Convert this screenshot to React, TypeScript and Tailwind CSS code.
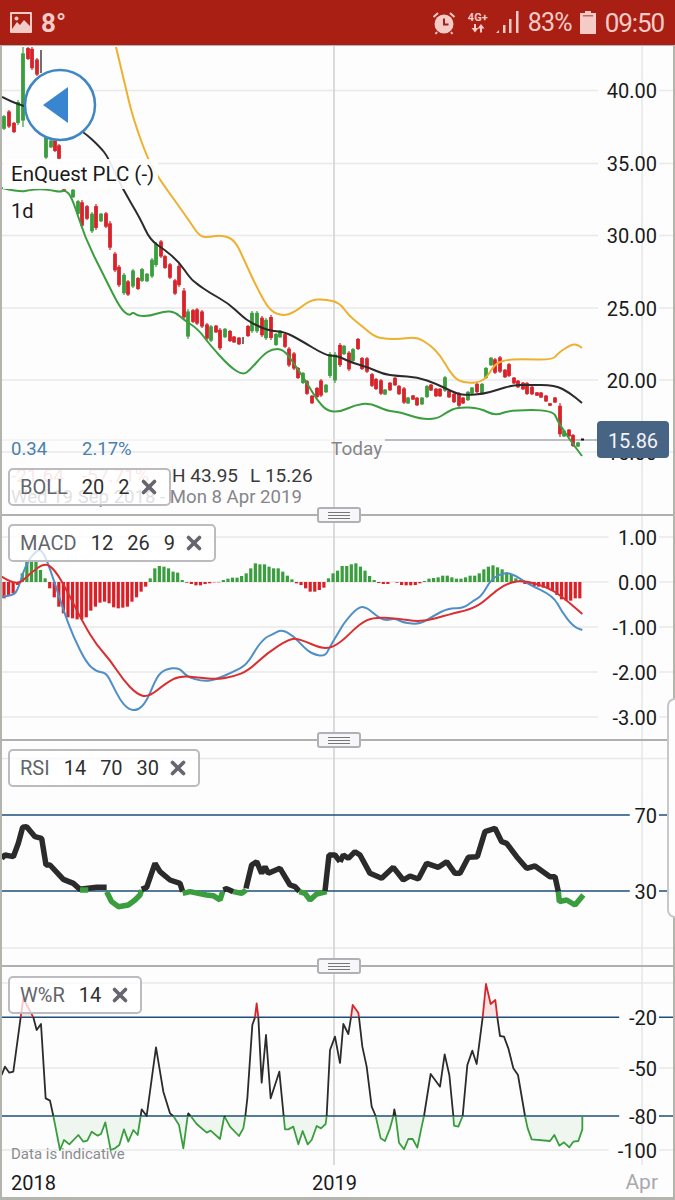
import React from 'react';
import { X } from 'lucide-react';

type Pt = [number, number];
type Seg = { c: 'k' | 'g' | 'r'; p: Pt[] };

const GREEN = '#3a9e3f';
const RED = '#d9232b';
const BLUE_LINE = '#1f4e79';
const DARK = '#2b2b2b';
const strokeOf = { k: DARK, g: GREEN, r: RED };

// points below were read off 3x crops, so convert back to page coords
const z = (ox: number, oy: number, pts: Pt[]): Pt[] => pts.map(([x, y]) => [ox + x / 3, oy + y / 3]);

const smooth = (pts: Pt[]) => {
  let d = 'M' + pts[0][0] + ' ' + pts[0][1];
  for (let i = 1; i < pts.length - 1; i++) {
    const mx = (pts[i][0] + pts[i + 1][0]) / 2;
    const my = (pts[i][1] + pts[i + 1][1]) / 2;
    d += ' Q' + pts[i][0] + ' ' + pts[i][1] + ' ' + mx + ' ' + my;
  }
  const last = pts[pts.length - 1];
  return d + ' L' + last[0] + ' ' + last[1];
};

const poly = (pts: Pt[]) => pts.map((p) => p.join(',')).join(' ');

// x, top, bottom, colour (0 red, 1 green, 2 black)
const candles: number[][] = [
  [4,115,130,1],[9,110,128,0],[14,122,133,0],[18,100,125,1],[23,47,127,1],[28,47,60,0],[32,47,70,0],[37,58,76,0],[41,50,73,2],
  [46,130,160,1],[51,140,148,1],[55,140,152,0],[59,144,160,0],[64,189,192,0],[73,189,198,1],[78,200,215,1],[82,200,228,0],
  [87,205,220,0],[92,212,233,1],[96,204,230,0],[101,213,222,1],[106,212,228,0],[110,221,250,0],[115,252,272,0],[119,265,287,0],
  [124,273,295,1],[128,280,296,0],[133,269,288,1],[138,277,290,0],[142,268,282,1],[147,273,282,1],[152,258,278,1],[156,242,267,1],
  [161,240,258,0],[165,255,269,0],[170,263,279,0],[175,279,295,0],[179,264,287,0],[184,288,320,0],[188,309,339,1],[193,309,323,0],
  [197,308,325,0],[202,310,328,0],[207,323,340,0],[211,325,342,1],[216,325,333,0],[220,328,350,0],[225,328,338,1],[230,330,342,0],
  [234,336,343,0],[239,337,345,0],[243,337,344,2],[248,325,337,0],[252,311,333,1],[257,311,333,1],[262,316,337,0],[266,318,340,1],
  [271,315,340,0],[276,333,346,1],[280,330,338,1],[285,333,348,0],[289,347,367,0],[294,352,370,0],[298,367,379,0],[303,372,384,1],
  [307,380,395,0],[312,395,404,0],[317,387,398,0],[321,379,397,0],[326,384,393,1],[330,352,378,1],[335,352,383,1],[340,343,367,0],
  [344,345,355,1],[349,351,371,0],[353,348,362,1],[358,338,350,0],[362,357,370,0],[367,357,373,0],[372,373,387,0],[376,378,390,0],
  [381,379,395,0],[385,389,395,1],[390,382,391,0],[395,377,386,0],[399,385,395,0],[404,387,404,0],[408,397,404,1],[413,395,400,0],
  [417,397,406,0],[422,397,405,1],[427,385,398,1],[431,384,391,0],[436,388,397,0],[440,388,397,0],[445,376,392,1],[449,390,398,0],
  [454,393,403,0],[459,392,407,0],[463,397,404,0],[468,391,401,1],[472,387,394,1],[477,383,393,0],[482,383,394,1],[486,367,379,1],
  [491,357,366,1],[495,358,374,0],[500,356,373,0],[505,369,378,0],[509,363,377,0],[514,377,384,0],[518,380,388,0],[523,382,390,0],
  [527,382,395,0],[532,386,395,0],[537,392,396,0],[541,392,398,0],[546,395,402,0],[550,403,406,0],[555,397,403,0],[560,403,437,0],
  [564,430,437,1],[569,429,437,0],[573,434,447,0],[578,442,447,1],
];

const bollUpper: Pt[] = [
  [116,47],[125,85],[133,118],[148,160],[160,180],[178,205],[190,222],[200,237],[210,237],[222,235],[235,240],[245,262],[258,290],
  [270,311],[283,316],[295,312],[310,300],[325,299],[340,303],[348,315],[363,327],[375,337],[387,339],[400,339],[417,337],[430,345],
  [440,355],[450,372],[458,381],[470,383],[480,382],[487,377],[495,364],[505,360],[520,359],[553,360],[558,353],[572,344],[578,345],[582,348],
];
const bollMid: Pt[] = [
  [2,97],[12,102],[24,106],[60,118],[84,132],[100,147],[108,157],[122,188],[140,218],[150,240],[165,250],[179,262],[190,278],[197,284],
  [210,293],[228,303],[243,317],[250,322],[262,328],[272,331],[285,332],[300,340],[325,355],[335,356],[340,357],[350,362],[370,368],
  [383,374],[397,376],[417,377],[437,384],[457,394],[467,395],[483,394],[497,390],[513,385],[527,385],[555,385],[570,393],[582,403],
];
const bollLower: Pt[] = [
  [2,188],[20,192],[30,190],[40,189],[50,190],[60,192],[65,190],[72,197],[85,238],[105,278],[120,308],[129,316],[133,312],[138,316],
  [150,316],[165,311],[175,312],[184,320],[198,329],[210,345],[230,367],[243,375],[250,370],[263,355],[272,349],[283,349],[293,362],
  [307,383],[317,400],[327,411],[340,412],[355,405],[370,403],[387,411],[400,412],[420,419],[437,419],[447,412],[458,407],[480,408],
  [495,416],[510,410],[553,410],[558,422],[570,440],[582,456],
];

// histogram ends in crop pixels, baseline is 216, one bar every 4.57px starting at x=4
const histEnds = [
  265,258,250,225,190,155,155,155,180,205,235,262,290,310,322,325,328,328,322,302,290,278,275,280,292,295,293,290,275,262,245,230,
  205,175,168,170,175,185,188,210,218,222,226,226,222,220,217,217,210,206,203,203,198,190,175,160,163,163,170,175,175,185,197,208,
  220,225,235,245,245,240,233,205,190,182,168,168,163,160,170,182,198,210,219,222,222,216,218,225,226,226,225,220,213,206,204,202,
  197,197,202,206,206,202,197,197,190,178,170,166,172,178,187,192,205,210,222,225,228,230,233,235,243,255,268,272,272,265,265,
];

const macdBlue: Pt[] = [
  ...z(0,510,[[5,260],[40,258],[55,235],[75,170],[100,130],[125,115],[150,175],[190,300],[220,380],[260,460],[290,485],[318,488],[335,520],
    [360,570],[385,598],[412,602],[440,575],[470,500],[495,478],[537,472],[560,500],[610,515],[650,508],[700,485],[740,465],[775,405],
    [800,380],[815,375],[845,358],[880,378],[910,410],[935,432],[975,440],[990,410]]),
  ...z(340,510,[[0,360],[15,335],[55,290],[80,292],[110,318],[135,332],[165,325],[190,338],[240,343],[280,318],[325,294],[370,295],
    [400,272],[425,258],[455,205],[495,187],[525,195],[560,220],[640,258],[665,305],[700,350],[727,360]]),
];
const macdRed: Pt[] = [
  ...z(0,510,[[5,200],[50,230],[90,190],[135,158],[165,180],[200,240],[250,340],[290,405],[330,450],[370,510],[410,552],[445,562],[500,518],
    [540,497],[600,503],[650,508],[700,500],[745,482],[800,430],[870,385],[900,387],[975,420]]),
  ...z(340,510,[[0,400],[60,340],[100,322],[170,325],[245,337],[330,313],[390,298],[425,280],[470,240],[510,217],[550,212],[620,230],[670,262],[727,312]]),
];

const L = (c: Seg['c'], pts: Pt[]): Seg => ({ c, p: z(0, 730, pts) });
const R = (c: Seg['c'], pts: Pt[]): Seg => ({ c, p: z(340, 730, pts) });
const rsi: Seg[] = [
  L('k',[[5,385],[15,375],[40,380],[55,340],[68,292],[80,290],[105,320],[125,325],[138,405],[150,405],[190,448],[220,460],[240,478],[265,475],[290,472],[320,472]]),
  L('g',[[240,480],[265,480]]),
  L('g',[[320,485],[335,515],[355,530],[385,525],[405,510],[420,495],[425,480]]),
  L('k',[[425,478],[440,472],[465,400],[480,425],[510,450],[540,460],[548,485]]),
  L('g',[[548,490],[570,485],[620,495],[640,497],[660,510],[668,485]]),
  L('k',[[670,480],[680,476],[700,485]]),
  L('g',[[700,485],[725,490],[738,480]]),
  L('k',[[738,475],[755,405],[770,395],[785,430],[795,410],[805,430],[840,415],[870,465],[885,470],[898,484]]),
  L('g',[[898,485],[915,490],[930,510],[950,492],[980,485]]),
  L('k',[[975,483],[987,375],[1005,375],[1020,395]]),
  R('k',[[0,395],[10,375],[25,385],[45,365],[60,375],[90,430],[125,445],[160,412],[190,450],[210,438],[235,447],[260,400],[295,412],[320,395],[345,430],[360,430],[385,382],[412,380],[435,305],[465,295],[485,335],[500,340],[530,380],[560,415],[585,408],[630,440],[645,440],[655,485]]),
  R('g',[[655,485],[658,515],[680,510],[705,525],[730,495]]),
];

const WL = (c: Seg['c'], pts: Pt[]): Seg => ({ c, p: z(0, 960, pts) });
const WR = (c: Seg['c'], pts: Pt[]): Seg => ({ c, p: z(340, 960, pts) });
const wpr: Seg[] = [
  WL('k',[[5,345],[15,320],[28,338],[40,335],[62,172]]),
  WL('r',[[62,172],[70,115],[100,172]]),
  WL('k',[[100,172],[110,210],[123,192],[137,415],[150,422],[160,468]]),
  WL('g',[[160,468],[180,570],[192,540],[208,553],[235,525],[250,545],[262,542],[275,515],[293,527],[303,522],[316,487],[332,570],[345,565],[358,555],[372,508],[385,545],[400,510],[413,525],[422,468]]),
  WL('k',[[422,468],[425,448],[440,468],[468,262],[490,395],[510,460],[520,468]]),
  WL('g',[[520,468],[537,495],[550,565],[563,468]]),
  WL('k',[[563,468],[565,460],[572,468]]),
  WL('g',[[572,468],[590,492],[620,518],[632,512],[660,537],[673,468]]),
  WL('k',[[673,468],[675,472]]),
  WL('g',[[675,472],[690,500],[717,528],[730,505],[736,468]]),
  WL('k',[[736,468],[742,415],[757,195],[765,172]]),
  WL('r',[[765,172],[770,130],[775,172]]),
  WL('k',[[775,172],[785,368],[798,225],[812,415],[838,335],[851,468]]),
  WL('g',[[851,468],[855,508],[865,508],[880,500],[895,553],[908,513],[923,553],[935,540],[950,498],[963,505],[977,492],[980,468]]),
  WL('k',[[980,468],[990,270],[1005,230],[1020,310]]),
  WR('k',[[0,310],[10,192],[25,222],[33,172]]),
  WR('r',[[33,172],[38,135],[55,158],[57,172]]),
  WR('k',[[57,172],[67,260],[80,320],[95,440],[107,468]]),
  WR('g',[[107,468],[122,535],[135,543],[150,505],[160,468]]),
  WR('k',[[160,468],[163,448],[167,468]]),
  WR('g',[[167,468],[177,548],[192,568],[205,537],[218,537],[232,563],[245,500],[252,468]]),
  WR('k',[[252,468],[272,342],[300,380],[314,283],[328,345],[340,468]]),
  WR('g',[[340,468],[342,497],[355,500],[368,468]]),
  WR('k',[[368,468],[382,315],[397,272],[410,312],[428,172]]),
  WR('r',[[428,172],[438,72],[452,132],[466,120],[472,172]]),
  WR('k',[[472,172],[480,228],[492,230],[505,265],[520,325],[534,345],[555,468]]),
  WR('g',[[555,468],[563,505],[575,538],[630,543],[643,525],[658,557],[672,547],[688,562],[700,545],[715,543],[727,508],[727,468]]),
];

const AxisLabel = ({ y, text, colour = '#1a1a1a' }: { y: number; text: string; colour?: string }) => {
  const w = text.length * 10.6 + 6;
  return (
    <g>
      <rect x={657 - w} y={y - 3} width={w + 2} height={6} fill="#fdfdfd" />
      <text x={657} y={y + 7.5} textAnchor="end" fontSize={20} fill={colour}>{text}</text>
    </g>
  );
};

const Grid = ({ ys, top, bottom }: { ys: number[]; top: number; bottom: number }) => (
  <g>
    {ys.map((y) => <line key={y} x1={2} x2={673} y1={y} y2={y} stroke="#e9e9e9" strokeWidth={1.5} />)}
    <line x1={334} x2={334} y1={top} y2={bottom} stroke="#cfcfcf" strokeWidth={1.5} />
    <line x1={642} x2={642} y1={top} y2={bottom} stroke="#e6e6e6" strokeWidth={1.5} />
  </g>
);

const Handle = () => (
  <div className="absolute -bottom-[9px] left-[315px] z-10 flex h-[16px] w-[44px] flex-col items-center justify-center gap-[2px] rounded-[3px] border-2 border-[#b0b0b6] bg-[#f7f7f9]">
    <span className="h-px w-[22px] bg-[#777]" />
    <span className="h-px w-[22px] bg-[#777]" />
    <span className="h-px w-[22px] bg-[#777]" />
  </div>
);

const IndicatorTag = ({ name, params, className }: { name: string; params: string[]; className: string }) => (
  <div className={'absolute left-[6px] z-10 flex h-[38px] items-center gap-[14px] rounded-[5px] border-2 border-[#bcbcc0] bg-white/75 pl-[10px] pr-[9px] text-[20px] leading-none ' + className}>
    <span className="text-[#62656b]">{name}</span>
    {params.map((p, i) => <span key={i} className="text-[#2f2f2f]">{p}</span>)}
    <X size={22} strokeWidth={4} className="-ml-[6px] text-[#66666e]" />
  </div>
);

const StatusBar = () => (
  <div className="flex h-[46px] shrink-0 items-center border-b border-[#b5b5b5] bg-[#a91f14] pl-[10px] pr-[11px] text-[#f5cbc7]">
    <svg width="22" height="21" viewBox="0 0 22 21" className="shrink-0">
      <rect width="22" height="21" rx="1" fill="#f5cbc7" />
      <rect x="2" y="2" width="18" height="17" fill="#a91f14" />
      <circle cx="6.5" cy="6.5" r="2" fill="#f5cbc7" />
      <path d="M2 17 L7 10 L10 13 L14 8 L20 14 V19 H2 Z" fill="#f5cbc7" />
    </svg>
    <span className="ml-[9px] text-[26px] font-bold leading-none">8°</span>
    <svg width="24" height="24" viewBox="0 0 24 24" className="ml-auto shrink-0">
      <circle cx="12" cy="13" r="9.5" fill="#f5cbc7" />
      <path d="M12 7.5 V13.5 H16.5" fill="none" stroke="#a91f14" strokeWidth="2" />
      <path d="M1.5 6 L6 2 M22.5 6 L18 2 M5 21 L3.5 23 M19 21 L20.5 23" stroke="#f5cbc7" strokeWidth="2" />
    </svg>
    <div className="ml-[10px] flex w-[24px] flex-col items-center">
      <span className="text-[11px] font-bold leading-[12px]">4G+</span>
      <svg width="14" height="9" viewBox="0 0 14 9" fill="#f5cbc7">
        <path d="M3 0 H5 V4 H7.5 L4 8.5 L0.5 4 H3 Z" />
        <path d="M9 8.5 H11 V4.5 H13.5 L10 0 L6.5 4.5 H9 Z" />
      </svg>
    </div>
    <svg width="23" height="23" viewBox="0 0 23 23" fill="#f5cbc7" className="ml-[6px] shrink-0">
      <path d="M0 22 L3 19 V22 Z" />
      <rect x="7" y="14" width="2.5" height="8" />
      <rect x="13" y="8" width="2.5" height="14" />
      <rect x="20" y="0" width="2.5" height="22" />
    </svg>
    <span className="ml-[9px] w-[45px] text-[25px] leading-none tracking-[-0.8px]">83%</span>
    <svg width="16" height="23" viewBox="0 0 16 23" className="ml-[7px] shrink-0">
      <path d="M5 0 H11 V2 H16 V23 H0 V2 H5 Z" fill="#f5cbc7" />
      <rect x="3" y="4" width="10" height="1.5" fill="#a91f14" opacity="0.6" />
    </svg>
    <span className="ml-[9px] text-[26px] leading-none tracking-[-1.1px]">09:50</span>
  </div>
);

const MainPanel = () => (
  <div className="relative h-[470px] shrink-0 border-b-2 border-[#b0b0b0]">
    <svg viewBox="2 46 671 468" className="block h-[468px] w-[671px]">
      <Grid ys={[90.5, 163.5, 235.5, 308, 380, 452]} top={46} bottom={514} />
      <line x1={2} x2={385} y1={440} y2={440} stroke="#ececec" strokeWidth={1} />
      <line x1={385} x2={600} y1={440} y2={440} stroke="#a3a8ae" strokeWidth={1.5} />
      {candles.map(([x, t, b, c]) => {
        const col = c === 0 ? RED : c === 1 ? GREEN : '#111';
        const inset = (b - t) * 0.08;
        return (
          <g key={x}>
            <line x1={x} x2={x} y1={t} y2={b} stroke={col} strokeWidth={1.2} />
            {c !== 2 && <rect x={x - 1.9} y={t + inset} width={3.8} height={b - t - inset * 2} fill={col} />}
          </g>
        );
      })}
      <rect x={581} y={438.5} width={3} height={2} fill="#111" />
      <path d={smooth(bollUpper)} fill="none" stroke="#eeb02f" strokeWidth={2} />
      <path d={smooth(bollMid)} fill="none" stroke={DARK} strokeWidth={2} />
      <path d={smooth(bollLower)} fill="none" stroke={GREEN} strokeWidth={2} />
      <circle cx={60} cy={105} r={35} fill="#fff" stroke="#3f86c4" strokeWidth={2.5} />
      <path d="M43 105 L68 87 V123 Z" fill="#3a85d0" />
      <AxisLabel y={90.5} text="40.00" />
      <AxisLabel y={163.5} text="35.00" />
      <AxisLabel y={235.5} text="30.00" />
      <AxisLabel y={308} text="25.00" />
      <AxisLabel y={380} text="20.00" />
      <AxisLabel y={452} text="15.00" />
      <rect x={597} y={421} width={72} height={37} rx={4} fill="#486484" />
      <text x={633} y={447.5} textAnchor="middle" fontSize={20} fill="#f2f4f7">15.86</text>
    </svg>
    <div className="absolute left-[1px] top-[113px] bg-white/90 pl-[8px] pr-[4px] text-[20.5px] leading-[30px] text-[#1a1a1a]">EnQuest PLC (-)</div>
    <div className="absolute left-[9px] top-[153px] text-[20px] leading-[24px] text-[#1a1a1a]">1d</div>
    <div className="absolute left-[9px] top-[393px] flex text-[18.5px] leading-[20px] text-[#4a7fae]">
      <span className="w-[71px]">0.34</span>
      <span>2.17%</span>
    </div>
    <div className="absolute left-[329px] top-[392px] text-[19px] leading-[22px] text-[#85858a]">Today</div>
    <div className="absolute left-[9px] top-[419px] flex text-[19px] leading-[22px] text-[#e9a09f]">
      <span className="w-[71px]">-21.64</span>
      <span>-57.71%</span>
    </div>
    <div className="absolute left-[170px] top-[419px] flex text-[19px] leading-[22px] text-[#3a3a3a]">
      <span className="w-[78px]">H 43.95</span>
      <span>L 15.26</span>
    </div>
    <div className="absolute left-[9px] top-[440px] text-[18.6px] leading-[22px] text-[#85858a]">Wed 19 Sep 2018 - Mon 8 Apr 2019</div>
    <IndicatorTag name="BOLL" params={['20', '2']} className="top-[422px]" />
    <Handle />
  </div>
);

const MacdPanel = () => {
  const base = 216;
  return (
    <div className="relative h-[225px] shrink-0 border-b-2 border-[#b0b0b0]">
      <svg viewBox="2 516 671 223" className="block h-[223px] w-[671px]">
        <Grid ys={[537, 582, 627, 672, 717]} top={516} bottom={739} />
        {histEnds.map((end, i) => {
          const x = 4 + i * 4.57;
          const h = Math.abs(end - base) / 3;
          return (
            <rect key={i} x={x - 1.6} y={end < base ? 582 - h : 582} width={3.2} height={h} fill={end < base ? GREEN : '#dc1f26'} />
          );
        })}
        <path d={smooth(macdBlue)} fill="none" stroke="#4f8fc7" strokeWidth={2} />
        <path d={smooth(macdRed)} fill="none" stroke="#d92f30" strokeWidth={2} />
        <AxisLabel y={537} text="1.00" />
        <AxisLabel y={582} text="0.00" />
        <AxisLabel y={627} text="-1.00" />
        <AxisLabel y={672} text="-2.00" />
        <AxisLabel y={717} text="-3.00" />
      </svg>
      <IndicatorTag name="MACD" params={['12', '26', '9']} className="top-[8px]" />
      <Handle />
    </div>
  );
};

const RsiPanel = () => (
  <div className="relative h-[226px] shrink-0 border-b-2 border-[#b0b0b0]">
    <svg viewBox="2 741 671 224" className="block h-[224px] w-[671px]">
      <Grid ys={[758.5, 948]} top={741} bottom={965} />
      <line x1={2} x2={673} y1={815} y2={815} stroke={BLUE_LINE} strokeWidth={1.5} />
      <line x1={2} x2={673} y1={891} y2={891} stroke={BLUE_LINE} strokeWidth={1.5} />
      <AxisLabel y={815} text="70" />
      <AxisLabel y={891} text="30" />
      {rsi.map((s, i) => (
        <polyline key={i} points={poly(s.p)} fill="none" stroke={strokeOf[s.c]} strokeWidth={5.5} strokeLinejoin="bevel" />
      ))}
    </svg>
    <IndicatorTag name="RSI" params={['14', '70', '30']} className="top-[8px]" />
    <Handle />
  </div>
);

const WprPanel = () => {
  const fillPts = (s: Seg) => {
    const level = s.c === 'g' ? 1116 : 1017.3;
    return poly([...s.p, [s.p[s.p.length - 1][0], level]]);
  };
  return (
    <div className="relative flex-1">
      <svg viewBox="2 967 671 198" className="block h-[198px] w-[671px]">
        <Grid ys={[983, 1068, 1150]} top={967} bottom={1165} />
        {wpr.filter((s) => s.c !== 'k').map((s, i) => (
          <polygon key={i} points={fillPts(s)} fill={s.c === 'g' ? '#eff6f0' : '#fbe3e3'} />
        ))}
        <line x1={2} x2={673} y1={1017.3} y2={1017.3} stroke={BLUE_LINE} strokeWidth={1.5} />
        <line x1={2} x2={673} y1={1116} y2={1116} stroke={BLUE_LINE} strokeWidth={1.5} />
        <AxisLabel y={1017.3} text="-20" />
        <AxisLabel y={1068} text="-50" />
        <AxisLabel y={1116} text="-80" />
        <AxisLabel y={1150} text="-100" />
        {wpr.map((s, i) => (
          <polyline key={i} points={poly(s.p)} fill="none" stroke={strokeOf[s.c]} strokeWidth={1.8} strokeLinejoin="round" />
        ))}
      </svg>
      <IndicatorTag name="W%R" params={['14']} className="top-[9px]" />
      <div className="absolute left-[9px] top-[178px] text-[15px] leading-[18px] text-[#8c8c90]">Data is indicative</div>
      <div className="flex h-[32px] items-center pl-[9px] pr-[15px] pt-[3px] text-[20px] leading-none text-[#1a1a1a]">
        <span className="w-[301px]">2018</span>
        <span>2019</span>
        <span className="ml-auto text-[21px] text-[#a9a9ad]">Apr</span>
      </div>
    </div>
  );
};

export default function App() {
  return (
    <div className="relative flex h-[1200px] w-[675px] flex-col overflow-hidden bg-[#fdfdfd] font-[Roboto,sans-serif]">
      <StatusBar />
      <div className="flex flex-1 flex-col border-x-2 border-b-[3px] border-[#b4b4ae]">
        <MainPanel />
        <MacdPanel />
        <RsiPanel />
        <WprPanel />
      </div>
      <div className="absolute right-0 top-[698px] h-[220px] w-[8px] rounded-l-[8px] border-y-2 border-l-2 border-[#c8c8cc] bg-[#fdfdfd]" />
    </div>
  );
}
